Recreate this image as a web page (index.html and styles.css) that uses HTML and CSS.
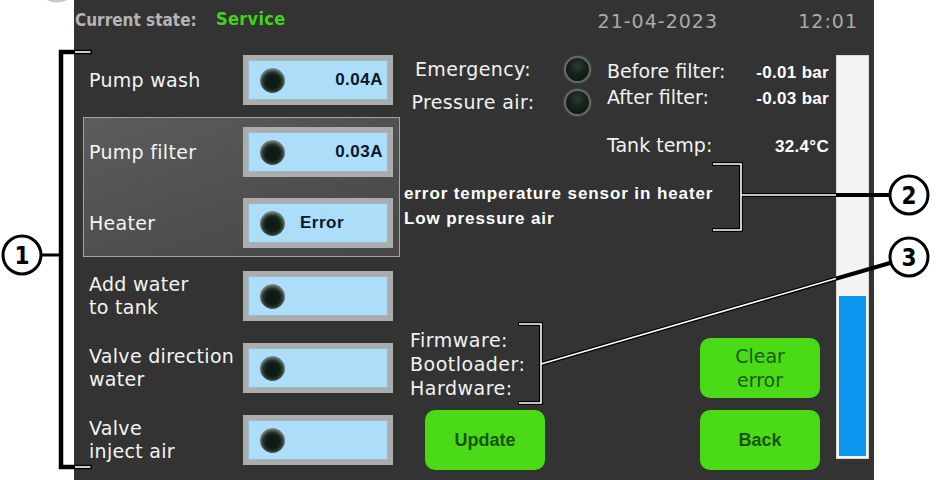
FILE: index.html
```html
<!DOCTYPE html>
<html lang="en">
<head>
<meta charset="utf-8">
<title>Service screen</title>
<link rel="stylesheet" href="styles.css">
</head>
<body>
<div class="page">
  <main class="screen">
    <header class="topbar">
      <span class="state-label">Current state:</span>
      <span class="state-value">Service</span>
      <span class="date">21-04-2023</span>
      <span class="time">12:01</span>
    </header>

    <section class="outputs">
      <div class="row">
        <span class="label">Pump wash</span>
        <div class="box"><span class="led"></span><span class="val">0.04A</span></div>
      </div>
      <div class="group">
        <div class="row">
          <span class="label">Pump filter</span>
          <div class="box"><span class="led"></span><span class="val">0.03A</span></div>
        </div>
        <div class="row">
          <span class="label">Heater</span>
          <div class="box"><span class="led"></span><span class="val val-left">Error</span></div>
        </div>
      </div>
      <div class="row">
        <span class="label">Add water<br>to tank</span>
        <div class="box"><span class="led"></span></div>
      </div>
      <div class="row">
        <span class="label">Valve direction<br>water</span>
        <div class="box"><span class="led"></span></div>
      </div>
      <div class="row">
        <span class="label">Valve<br>inject air</span>
        <div class="box"><span class="led"></span></div>
      </div>
    </section>

    <section class="center">
      <div class="status">
        <div class="inputs">
          <div class="input"><span class="in-label">Emergency:</span><span class="led-big"></span></div>
          <div class="input"><span class="in-label">Pressure air:</span><span class="led-big"></span></div>
        </div>
        <div class="readings">
          <div class="reading"><span>Before filter:</span><b>-0.01 bar</b></div>
          <div class="reading"><span>After filter:</span><b>-0.03 bar</b></div>
          <div class="reading tank"><span>Tank temp:</span><b>32.4°C</b></div>
        </div>
      </div>
      <div class="errors">
        <p>error temperature sensor in heater</p>
        <p>Low pressure air</p>
      </div>
      <div class="bottom">
        <div class="info">
          <div class="versions">
            <div>Firmware:</div>
            <div>Bootloader:</div>
            <div>Hardware:</div>
          </div>
          <button class="btn btn-bold update">Update</button>
        </div>
        <div class="actions">
          <button class="btn">Clear<br>error</button>
          <button class="btn btn-bold">Back</button>
        </div>
      </div>
    </section>

    <aside class="level"><div class="level-fill" style="height:160px"></div></aside>
  </main>

  <svg class="callouts" width="938" height="480" viewBox="0 0 938 480" xmlns="http://www.w3.org/2000/svg">
    <circle cx="57" cy="-19" r="20" fill="none" stroke="#c8c8c8" stroke-width="3"/>
    <!-- bracket 1 -->
    <g fill="none" stroke="#000" stroke-width="4.5" stroke-linejoin="miter">
      <path d="M92 52 H61 V467 H92"/>
      <path d="M42 255 H61" stroke-width="3"/>
    </g>
    <g fill="none" stroke="#fff" stroke-width="1.6">
      <path d="M75 52 H90.5"/>
      <path d="M75 467 H90.5"/>
    </g>
    <!-- bracket 2 -->
    <g fill="none" stroke="#000" stroke-width="4" stroke-linejoin="miter">
      <path d="M712 164 H741 V230 H712"/>
      <path d="M741 195 H890"/>
    </g>
    <g fill="none" stroke="#fff" stroke-width="1.6">
      <path d="M713 164 H741 V230 H713"/>
      <path d="M741 195 H836"/>
    </g>
    <!-- bracket 3 -->
    <g fill="none" stroke="#000" stroke-width="4" stroke-linejoin="miter">
      <path d="M518 324 H541 V403 H518"/>
      <path d="M541 364 L890 263"/>
    </g>
    <g fill="none" stroke="#fff" stroke-width="1.6">
      <path d="M519 324 H541 V403 H519"/>
      <path d="M541 364 L836 278.6"/>
    </g>
    <!-- circles -->
    <g fill="#fff" stroke="#000" stroke-width="3">
      <circle cx="22" cy="255" r="19"/>
      <circle cx="909" cy="195" r="19"/>
      <circle cx="909" cy="257" r="19"/>
    </g>
    <g class="num" text-anchor="middle">
      <text x="22" y="264">1</text>
      <text x="909" y="204">2</text>
      <text x="909" y="266">3</text>
    </g>
  </svg>
</div>
</body>
</html>
```

FILE: styles.css
```css
* { box-sizing: border-box; }

html, body {
  margin: 0;
  padding: 0;
  background: #ffffff;
}

body {
  font-family: "DejaVu Sans", Verdana, sans-serif;
}

.page {
  position: relative;
  width: 938px;
  height: 480px;
  overflow: hidden;
}

.screen {
  margin-left: 74px;
  width: 800px;
  height: 480px;
  background: #333333;
  display: grid;
  grid-template-columns: 326px 436px 33px 5px;
  grid-template-rows: 40px 440px;
  color: #f2f2f2;
}

/* ---------- header ---------- */
.topbar {
  grid-column: 1 / -1;
  display: flex;
  align-items: flex-start;
}

.state-label,
.state-value {
  font-family: "DejaVu Sans Condensed", "DejaVu Sans", sans-serif;
  font-stretch: condensed;
  font-weight: bold;
  font-size: 17px;
  line-height: 20px;
  padding-top: 10px;
}

.state-label {
  color: #b4b4b4;
  width: 142px;
  padding-left: 1px;
}

.state-value {
  color: #40d41a;
  font-size: 18px;
  padding-top: 9px;
  letter-spacing: 0.3px;
  flex: 1;
}

.date,
.time {
  color: #a9a9a9;
  font-size: 19px;
  line-height: 20px;
  letter-spacing: 1px;
  padding-top: 11px;
  text-align: right;
}

.date {
  width: 126px;
  margin-right: 80px;
}

.time {
  width: 60px;
  margin-right: 16px;
}

/* ---------- left outputs ---------- */
.outputs {
  padding-top: 15px;
  display: flex;
  flex-direction: column;
}

.row {
  display: flex;
  align-items: center;
  height: 50px;
  padding-left: 15px;
}

.outputs > .row + .row {
  margin-top: 22px;
}

.group + .row {
  margin-top: 14px;
}

.label {
  width: 154px;
  font-size: 19px;
  letter-spacing: 0.3px;
  line-height: 23px;
  color: #f4f4f4;
}

.group {
  margin: 12px 0 0 9px;
  width: 317px;
  border: 1px solid #a4a4a4;
  background: linear-gradient(160deg, #5c5c5c 0%, #4e4e4e 60%, #474747 100%);
  padding: 9px 0 8px 5px;
}

.group .row {
  padding-left: 0;
}

.group .row + .row {
  margin-top: 21px;
}

.box {
  width: 150px;
  height: 50px;
  border: 5px solid #acacac;
  background: #acdef9;
  display: flex;
  align-items: center;
  padding: 0 5px 0 12px;
  box-shadow: inset 0 0 0 1px #9fb8c6;
}

.led {
  width: 25px;
  height: 25px;
  border-radius: 50%;
  background: radial-gradient(circle at 50% 55%, #0c1710 0%, #111f16 38%, #2a3832 52%, #6f807b 68%, #9fb4b6 82%, rgba(172, 222, 249, 0) 100%);
}

.val {
  margin-left: auto;
  font-family: "Liberation Sans", Arial, sans-serif;
  font-weight: bold;
  font-size: 17px;
  letter-spacing: 0.5px;
  color: #0b1729;
}

.val.val-left {
  margin-left: 15px;
}

/* ---------- center ---------- */
.center {
  display: flex;
  flex-direction: column;
}

.status {
  margin-top: 14px;
  display: flex;
}

.inputs {
  width: 207px;
}

.input {
  display: flex;
  align-items: center;
  height: 30px;
}

.input + .input {
  margin-top: 3px;
}

.in-label {
  width: 146px;
  text-align: center;
  font-size: 19px;
  letter-spacing: 0.4px;
}

.led-big {
  width: 27px;
  height: 27px;
  margin-left: 18px;
  border-radius: 50%;
  border: 2px solid #656b67;
  background: radial-gradient(circle at 50% 35%, #2b3d31 0%, #13221a 45%, #0b150f 100%);
  box-shadow: 0 0 2px rgba(130, 140, 135, 0.7);
}

.readings {
  width: 222px;
  padding-top: 5px;
}

.reading {
  display: flex;
  justify-content: space-between;
  align-items: baseline;
  line-height: 24px;
  font-size: 19px;
}

.reading b {
  font-family: "Liberation Sans", Arial, sans-serif;
  font-weight: bold;
  font-size: 17px;
  letter-spacing: 0.3px;
  color: #ffffff;
}

.reading.tank {
  margin-top: 22px;
}

.errors {
  margin-top: 22px;
  padding-left: 4px;
  font-family: "Liberation Sans", Arial, sans-serif;
  font-weight: bold;
  font-size: 17px;
  letter-spacing: 0.9px;
  color: #ffffff;
}

.errors p {
  margin: 0;
  line-height: 25px;
}

.bottom {
  margin-top: auto;
  padding-bottom: 10px;
  display: flex;
  align-items: flex-end;
}

.info {
  width: 300px;
}

.versions {
  padding-left: 10px;
  font-size: 19px;
  letter-spacing: 0.5px;
  line-height: 24px;
}

.actions {
  width: 120px;
  display: flex;
  flex-direction: column;
  gap: 12px;
}

.btn {
  display: block;
  width: 120px;
  height: 60px;
  border: none;
  border-radius: 10px;
  background: #4bdb16;
  color: #1d5a10;
  font-family: "DejaVu Sans", Verdana, sans-serif;
  font-size: 19px;
  line-height: 24px;
  padding: 0;
}

.btn-bold {
  font-family: "Liberation Sans", Arial, sans-serif;
  font-weight: bold;
  font-size: 18px;
  color: #1a520c;
}

.update {
  margin: 10px 0 0 25px;
}

/* ---------- level bar ---------- */
.level {
  margin-top: 15px;
  height: 404px;
  background: #f3f3f3;
  border: 1px solid #d8d8d8;
  padding: 2px;
  display: flex;
  flex-direction: column;
  justify-content: flex-end;
}

.level-fill {
  background: #0a95ef;
}

/* ---------- callouts ---------- */
.callouts {
  position: absolute;
  left: 0;
  top: 0;
  pointer-events: none;
}

.num {
  font-family: "DejaVu Sans Condensed", "DejaVu Sans", sans-serif;
  font-stretch: condensed;
  font-weight: bold;
  font-size: 24px;
  fill: #000;
}
```
